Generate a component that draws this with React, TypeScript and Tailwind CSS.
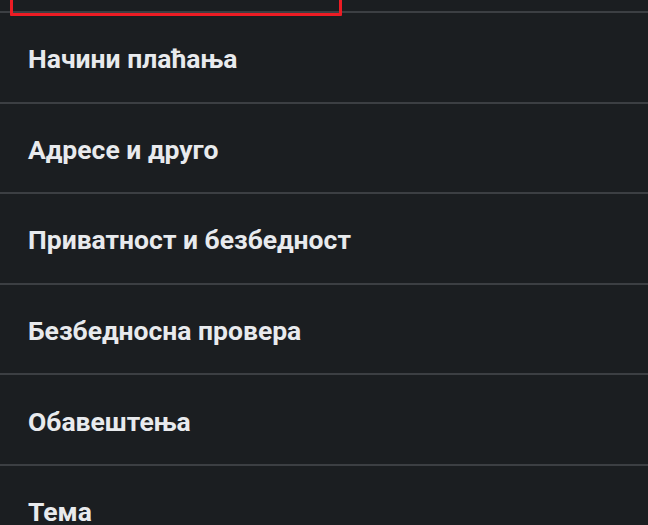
import React from 'react';

const items = [
  'Начини плаћања',
  'Адресе и друго',
  'Приватност и безбедност',
  'Безбедносна провера',
  'Обавештења',
  'Тема',
];

export default function App() {
  return (
    <div
      className="w-[648px] h-[525px] overflow-hidden bg-[#1b1e21]"
      style={{ fontFamily: 'Roboto, "Noto Sans", sans-serif' }}
    >
      {/* previous row, mostly scrolled off */}
      <div className="relative h-[13px] border-b-2 border-[#3c3f43]">
        <div className="absolute left-[10px] top-[-30px] w-[332px] h-[46px] border-[3px] border-[#ec1c24] rounded-[1px]" />
      </div>

      {items.map((label) => (
        <div
          key={label}
          className="h-[90.6px] flex items-center border-b-2 border-[#3c3f43] pl-[28px] pt-[3px]"
        >
          <span className="text-[26.5px] leading-[31px] font-bold text-[#e8eaed]">
            {label}
          </span>
        </div>
      ))}
    </div>
  );
}
